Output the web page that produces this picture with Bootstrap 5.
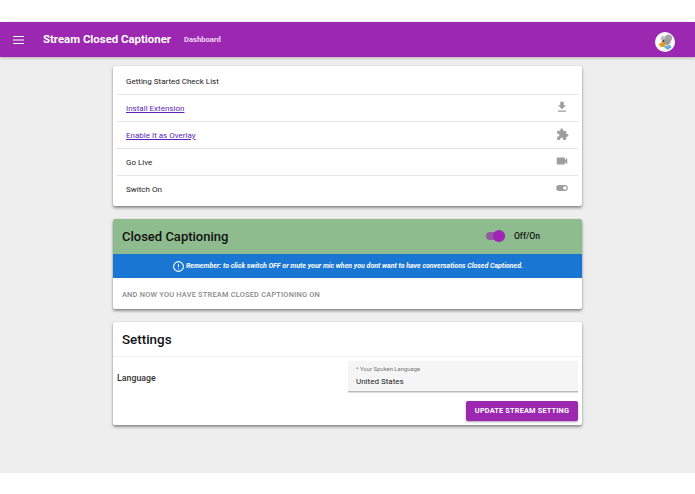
<!DOCTYPE html>
<html lang="en">
<head>
<meta charset="utf-8">
<title>Stream Closed Captioner</title>
<link rel="stylesheet" href="https://cdn.jsdelivr.net/npm/bootstrap@5.3.0/dist/css/bootstrap.min.css">
<style>
html,body{height:494px;overflow:hidden;background:#fff;font-family:Roboto,"Liberation Sans",sans-serif;}
.page-shell{margin-top:22px;height:451px;background:#eee;}
.top-bar{height:35px;background:#9c27b0;color:#fff;padding:0 8px 0 13px;box-shadow:0 1px 3px rgba(0,0,0,.25);}
.burger{width:11px;margin-right:19px;}
.brand-name{font-size:11.4px;font-weight:700;margin-right:13px;padding-top:1px;}
.dash-link{font-size:7.6px;font-weight:700;color:#f3d9f8;}
.avatar-wrap{width:20px;height:20px;margin-right:12px;}
.column{width:469px;margin:0 auto;padding-top:9px;}
.sheet{background:#fff;border-radius:2px;box-shadow:0 2px 3px rgba(0,0,0,.4),0 0 2px rgba(0,0,0,.12);overflow:hidden;margin-bottom:13px;}
.check-area{padding:2px 4px 2px;}
.check-row{height:27px;padding:2px 9px 0;border-bottom:1px solid #e4e4e4;font-size:8px;font-weight:400;color:#222;}
.check-row.last-row{border-bottom:0;height:28px;padding-top:0;}
.check-row a{color:#5e1fb8;}
.check-row svg{fill:#9e9e9e;display:block;margin-top:-4px;}
.head-green{height:35px;background:#8fbc8f;padding:0 9px;color:#111;}
.head-title{font-size:13px;font-weight:500;margin:0;}
.switch-holder{margin-left:auto;margin-right:33px;gap:9px;font-size:8.6px;font-weight:500;}
.switch-vis{position:relative;width:19px;height:8px;background:#8f5d9e;border-radius:4px;}
.switch-dot{position:absolute;right:0;top:-2px;width:12px;height:12px;border-radius:50%;background:#a024b8;}
.notice{height:24px;background:#1976d2;color:#fff;font-size:7px;font-weight:700;font-style:italic;gap:1px;}
.soft-line{height:31px;padding:2px 9px 0;font-size:7.4px;font-weight:500;color:#8a8a8a;letter-spacing:.03em;}
.settings-head{height:35px;padding:2px 9px 0;border-bottom:1px solid #f0f0f0;font-size:13.4px;font-weight:500;color:#111;}
.settings-body{padding:4px 4px 4px;height:68px;}
.lang-label{font-size:8.8px;font-weight:500;color:#333;padding-top:11px;}
.lang-field{width:230px;height:31px;background:#f5f5f5;border-bottom:1px solid #bbb;padding:4px 8px 0;box-shadow:0 1px 0 #ddd;}
.lang-caption{font-size:5.9px;color:#777;line-height:8px;}
.lang-value{font-size:8px;font-weight:400;color:#222;line-height:13px;margin-top:2px;}
.update-btn{display:block;width:112px;height:20px;margin:9px 0 0 auto;padding:0;border:0;border-radius:2px;background:#9c27b0;color:#fff;font-size:7.4px;font-weight:700;letter-spacing:.02em;box-shadow:0 1px 2px rgba(0,0,0,.35);}
</style>
</head>
<body>
<div class="page-shell">
  <nav class="top-bar d-flex align-items-center">
    <svg class="burger" viewBox="0 0 11 8" height="8" aria-hidden="true"><path d="M0 0h11v1H0zM0 3.500h11v1H0zM0 7h11v1H0z" fill="#fff"/></svg>
    <span class="brand-name">Stream Closed Captioner</span>
    <a class="dash-link text-decoration-none" href="#">Dashboard</a>
    <div class="avatar-wrap ms-auto">
      <svg viewBox="0 0 20 20" width="20" height="20" aria-hidden="true">
        <circle cx="10" cy="10" r="10" fill="#fff"/>
        <circle cx="13.500" cy="6" r="3.600" fill="#a5a5a5"/>
        <circle cx="8" cy="6.500" r="2.400" fill="#bdbdbd"/>
        <ellipse cx="11" cy="10" rx="4.500" ry="3" fill="#9a9a9a"/>
        <path d="M3.500 12.500l4.500-3 2.500 2-1 3.500-3.500 0z" fill="#e8971e"/>
        <path d="M9 15l3.500 3 4-2.500-1-2.500-4.500.5z" fill="#6aaee0"/>
        <circle cx="8.500" cy="9" r=".8" fill="#222"/>
      </svg>
    </div>
  </nav>
  <main class="column">
    <section class="sheet check-area">
      <div class="check-row d-flex align-items-center justify-content-between">Getting Started Check List</div>
      <div class="check-row d-flex align-items-center justify-content-between"><a href="#">Install Extension</a>
        <svg viewBox="0 0 24 24" width="14" height="14" aria-hidden="true"><path d="M19 9h-4V3H9v6H5l7 7 7-7zM5 18v2h14v-2H5z"/></svg></div>
      <div class="check-row d-flex align-items-center justify-content-between"><a href="#">Enable It as Overlay</a>
        <svg viewBox="0 0 24 24" width="13" height="13" aria-hidden="true"><path d="M20.500 11H19V7a2 2 0 0 0-2-2h-4V3.500a2.500 2.500 0 0 0-5 0V5H4a2 2 0 0 0-2 2v3.800h1.500a2.700 2.700 0 0 1 0 5.400H2V20a2 2 0 0 0 2 2h3.800v-1.500a2.700 2.700 0 0 1 5.400 0V22H17a2 2 0 0 0 2-2v-4h1.500a2.500 2.500 0 0 0 0-5z"/></svg></div>
      <div class="check-row d-flex align-items-center justify-content-between">Go Live
        <svg viewBox="0 0 24 24" width="14" height="14" aria-hidden="true"><path d="M17 10.500V7a1 1 0 0 0-1-1H4a1 1 0 0 0-1 1v10a1 1 0 0 0 1 1h12a1 1 0 0 0 1-1v-3.500l4 4v-11l-4 4z"/></svg></div>
      <div class="check-row last-row d-flex align-items-center justify-content-between">Switch On
        <svg viewBox="0 0 24 24" width="14" height="14" aria-hidden="true"><path d="M17 7H7a5 5 0 0 0 0 10h10a5 5 0 0 0 0-10zm0 8a3 3 0 1 1 0-6 3 3 0 0 1 0 6z"/></svg></div>
    </section>

    <section class="sheet">
      <div class="head-green d-flex align-items-center">
        <h2 class="head-title">Closed Captioning</h2>
        <div class="switch-holder d-flex align-items-center"><span class="switch-vis"><span class="switch-dot"></span></span><span>Off/On</span></div>
      </div>
      <div class="notice d-flex align-items-center justify-content-center">
        <svg viewBox="0 0 24 24" width="13" height="13" aria-hidden="true"><path fill="#fff" d="M12 2a10 10 0 1 0 0 20 10 10 0 0 0 0-20zm0 18a8 8 0 1 1 0-16 8 8 0 0 1 0 16zM11 7h2v6h-2zm0 8h2v2h-2z"/></svg>
        <span>Remember: to click switch OFF or mute your mic when you dont want to have conversations Closed Captioned.</span>
      </div>
      <div class="soft-line d-flex align-items-center">AND NOW YOU HAVE STREAM CLOSED CAPTIONING ON</div>
    </section>

    <section class="sheet">
      <div class="settings-head d-flex align-items-center">Settings</div>
      <div class="settings-body">
        <div class="d-flex justify-content-between">
          <div class="lang-label">Language</div>
          <div class="lang-field">
            <div class="lang-caption">* Your Spoken Language</div>
            <div class="lang-value">United States</div>
          </div>
        </div>
        <button class="update-btn" type="button">UPDATE STREAM SETTING</button>
      </div>
    </section>
  </main>
</div>
<script src="https://cdn.jsdelivr.net/npm/bootstrap@5.3.0/dist/js/bootstrap.bundle.min.js"></script>
</body>
</html>
